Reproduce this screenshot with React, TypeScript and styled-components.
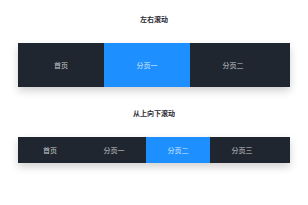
import React from "react";
import styled, { createGlobalStyle } from "styled-components";

const GlobalStyle = createGlobalStyle`
    body {
        margin: 0;
        background: #fff;
        font-family: "Noto Sans CJK SC", "Noto Sans", sans-serif;
    }
`;

const tabs1 = ["首页", "分页一", "分页二"];
const tabs2 = ["首页", "分页一", "分页二", "分页三"];

export default function App() {
    return (
        <Page>
            <GlobalStyle />
            <Title $top={13}>左右滚动</Title>
            <Bar $height={44}>
                {tabs1.map((t, i) => (
                    <Tab key={t} $width={86} $active={i === 1}>
                        {t}
                    </Tab>
                ))}
            </Bar>
            <Title $top={20}>从上向下滚动</Title>
            <Bar $height={26}>
                {tabs2.map((t, i) => (
                    <Tab key={t} $width={64} $active={i === 2}>
                        {t}
                    </Tab>
                ))}
            </Bar>
        </Page>
    );
}

const Page = styled.div`
    width: 308px;
    height: 205px;
    padding: 0 18px;
    box-sizing: border-box;
    display: flex;
    flex-direction: column;
    overflow: hidden;
`;

const Title = styled.div<{ $top: number }>`
    margin-top: ${(p) => p.$top}px;
    height: 12px;
    line-height: 12px;
    font-size: 7px;
    font-weight: bold;
    color: #2b2b33;
    text-align: center;
`;

const Bar = styled.div<{ $height: number }>`
    margin-top: 18px;
    height: ${(p) => p.$height}px;
    display: flex;
    overflow: hidden;
    background: #1f2630;
    box-shadow: 0 4px 8px rgba(0, 0, 0, 0.18);
    flex-shrink: 0;
`;

const Tab = styled.div<{ $width: number; $active: boolean }>`
    width: ${(p) => p.$width}px;
    flex-shrink: 0;
    display: flex;
    align-items: center;
    justify-content: center;
    font-size: 7px;
    color: ${(p) => (p.$active ? "#d8eaff" : "#c4c8cc")};
    background: ${(p) => (p.$active ? "#1e8fff" : "#1f2630")};
`;
